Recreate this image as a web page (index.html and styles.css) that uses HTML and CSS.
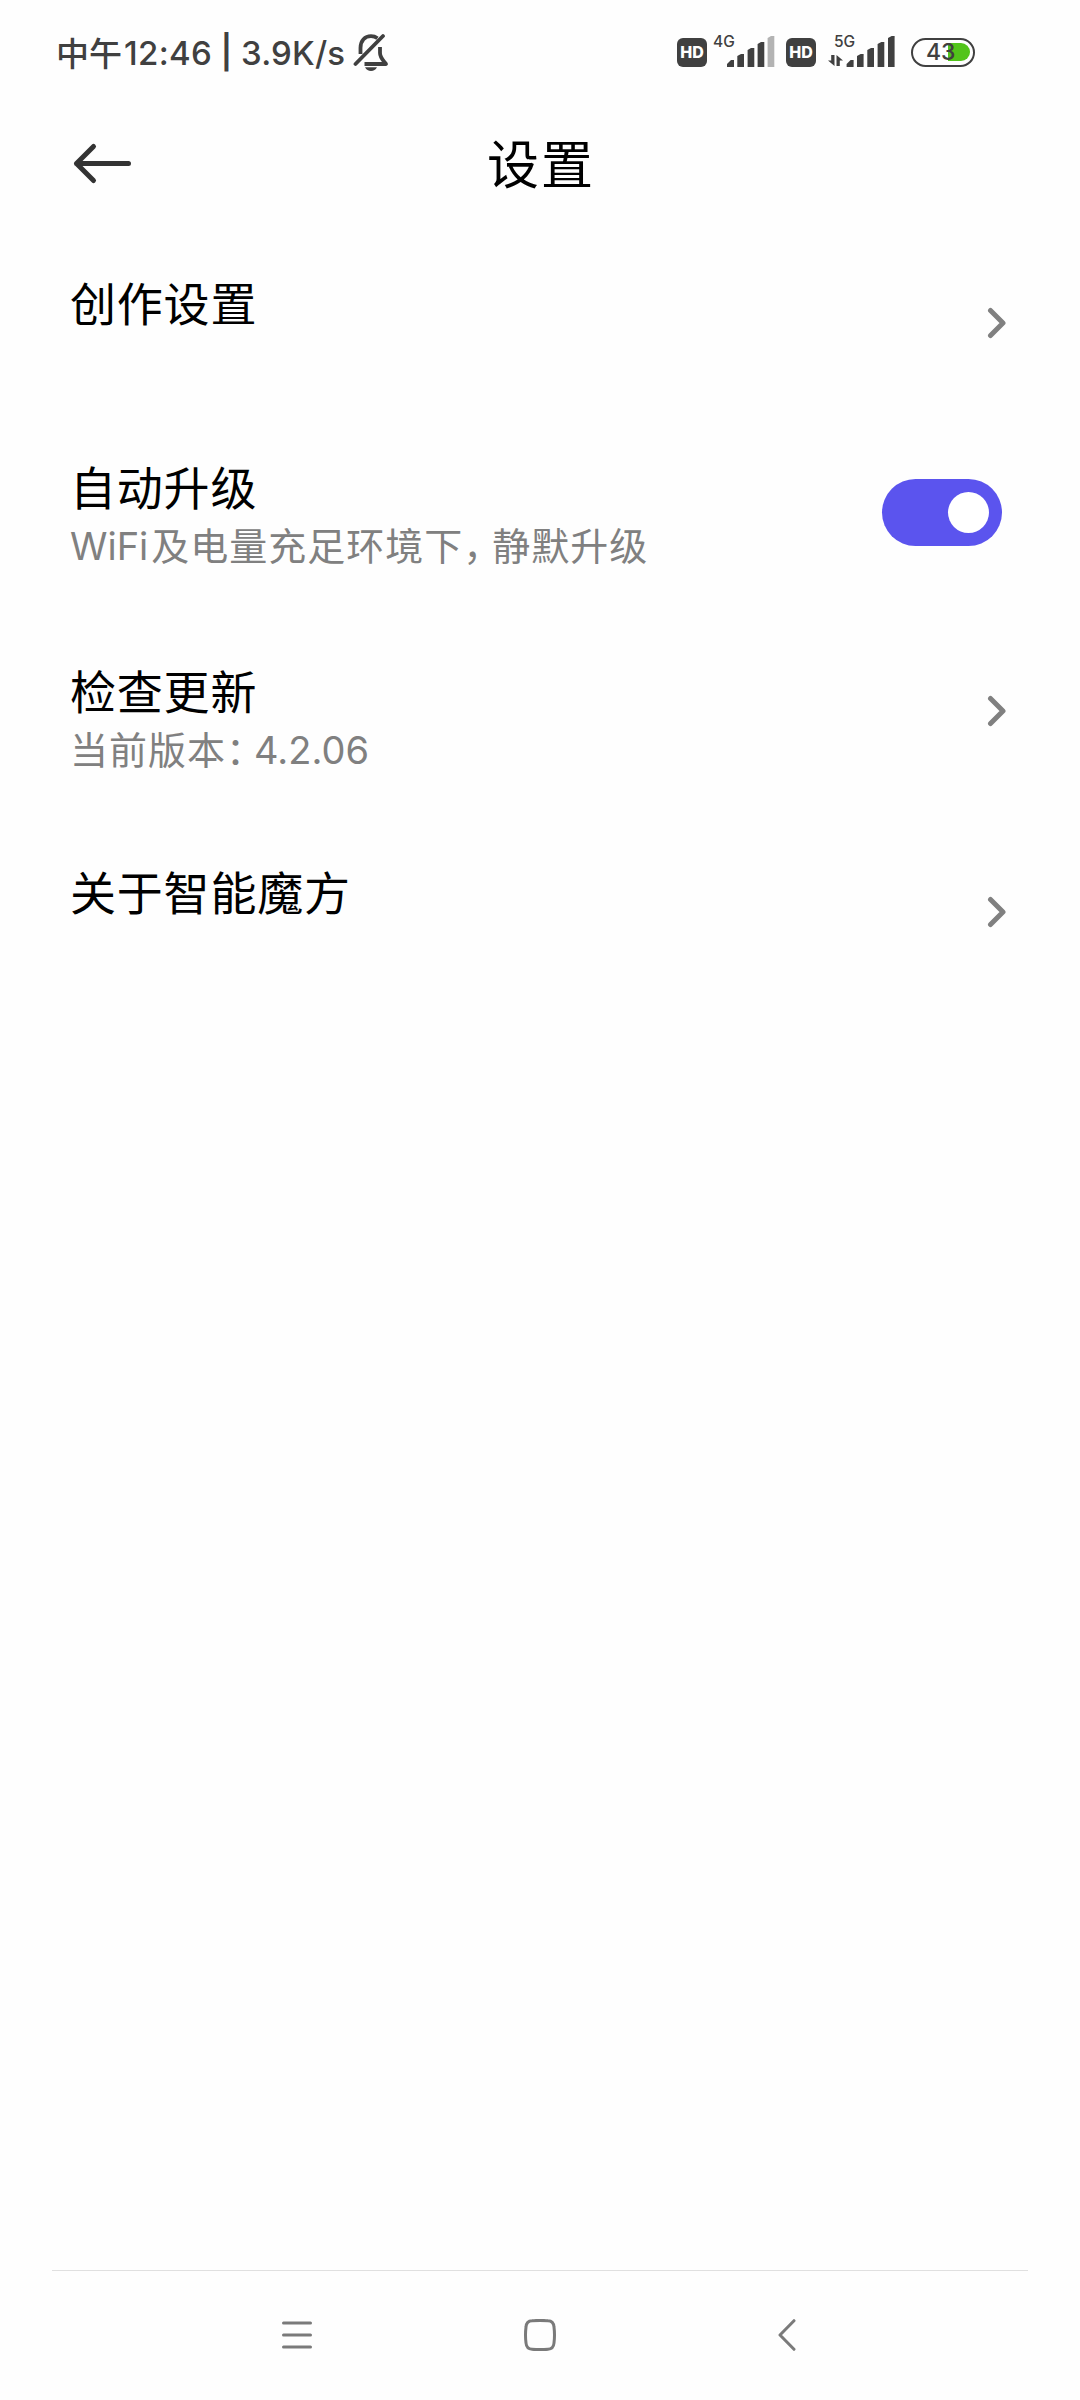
FILE: index.html
```html
<!DOCTYPE html>
<html lang="zh-CN">
<head>
    <meta charset="UTF-8">
    <meta name="viewport" content="width=device-width, initial-scale=1.0">
    <title>设置</title>
    <link rel="stylesheet" href="styles.css">
</head>
<body>
    <div class="statusbar">
        <div class="status-left">
            <span class="status-cn">中午</span><span class="status-time">12:46</span><span class="status-sep">|</span><span class="status-speed">3.9K/s</span>
            <svg class="bell" width="36" height="38" viewBox="0 0 36 38" fill="none" stroke="#404040" stroke-width="3.8">
                <path d="M7.5 21V15C7.5 7.5 12 3.2 18 3.2C20.5 3.2 22.5 3.8 24.5 5.2"/>
                <path d="M27 14V20C27 24.5 29.5 26.5 33 31H11.5" stroke-linejoin="round"/>
                <path d="M2.5 31L30 3" stroke-linecap="round"/>
                <path d="M12 34.2H24Q22 38 18 38T12 34.2Z" fill="#404040" stroke="none"/>
            </svg>
        </div>
        <div class="status-right">
            <span class="hd">HD</span>
            <div class="signal">
                <span class="net">4G</span>
                <svg width="48" height="32" viewBox="0 0 48 32" fill="#404040">
                    <path d="M0 31V28L4 24H7V31Z"/>
                    <path d="M10.3 31V20L14 18H17V31Z"/>
                    <path d="M20.6 31V14L24 12H27.3V31Z"/>
                    <path d="M30.6 31V8L34 6H37.3V31Z"/>
                    <path d="M40.6 31V2L44 0H47.3V31Z" fill="#b3b3b3"/>
                </svg>
            </div>
            <span class="hd">HD</span>
            <div class="signal signal-5g">
                <span class="net">5G</span>
                <svg width="67" height="32" viewBox="0 0 67 32" fill="#404040">
                    <path d="M3.2 19H6.5V30L0 24.5H3.2ZM8.5 19L15 24.5H11.8V30H8.5Z"/>
                    <path d="M18.6 31V28L22.6 24H25.6V31Z"/>
                    <path d="M29 31V20L32.6 18H35.6V31Z"/>
                    <path d="M39.3 31V14L43 12H46V31Z"/>
                    <path d="M49.6 31V8L53.3 6H56.3V31Z"/>
                    <path d="M60 31V2L63.6 0H66.6V31Z"/>
                </svg>
            </div>
            <div class="battery">
                <div class="battery-level"></div>
                <span class="battery-text">43</span>
            </div>
        </div>
    </div>

    <header class="header">
        <svg class="back" width="60" height="44" viewBox="0 0 60 44" fill="none" stroke="#333" stroke-width="5" stroke-linecap="round" stroke-linejoin="round">
            <path d="M21.5 4.5L4.5 21.5L21.5 38.5M4.5 21.5H56.5"/>
        </svg>
        <h1>设置</h1>
    </header>

    <main class="list">
        <div class="item item-create">
            <div class="item-text">
                <div class="title">创作设置</div>
            </div>
            <svg class="chevron" width="20" height="34" viewBox="0 0 20 34"><path d="M3.5 4.5L16 17L3.5 29.5"/></svg>
        </div>
        <div class="item item-upgrade">
            <div class="item-text">
                <div class="title">自动升级</div>
                <div class="desc"><span class="wifi">WiFi</span>及电量充足环境下<span class="comma">，</span>静默升级</div>
            </div>
            <div class="switch"><div class="knob"></div></div>
        </div>
        <div class="item item-check">
            <div class="item-text">
                <div class="title">检查更新</div>
                <div class="desc">当前版本<span class="colon">：</span><span class="version">4.2.06</span></div>
            </div>
            <svg class="chevron" width="20" height="34" viewBox="0 0 20 34"><path d="M3.5 4.5L16 17L3.5 29.5"/></svg>
        </div>
        <div class="item item-about">
            <div class="item-text">
                <div class="title">关于智能魔方</div>
            </div>
            <svg class="chevron" width="20" height="34" viewBox="0 0 20 34"><path d="M3.5 4.5L16 17L3.5 29.5"/></svg>
        </div>
    </main>

    <nav class="navbar">
        <svg width="30" height="32" viewBox="0 0 30 32" fill="none" stroke="#7a7a7a" stroke-width="3" stroke-linecap="round">
            <path d="M1.5 4H28.5M1.5 16H28.5M1.5 28H28.5"/>
        </svg>
        <svg class="home" width="32" height="32" viewBox="0 0 32 32" fill="none" stroke="#7a7a7a" stroke-width="3">
            <path d="M8 1.8Q16 1 24 1.8Q29.5 2 30 8Q31 16 30 24Q29.5 30 24 30.2Q16 31 8 30.2Q2.5 30 2 24Q1 16 2 8Q2.5 2 8 1.8Z"/>
        </svg>
        <svg width="18" height="32" viewBox="0 0 18 32" fill="none" stroke="#7a7a7a" stroke-width="3" stroke-linecap="round" stroke-linejoin="round">
            <path d="M16 1.7L2 16L16 30.3"/>
        </svg>
    </nav>
</body>
</html>
```
FILE: styles.css
```css
* {
    box-sizing: border-box;
}

body {
    font-family: "Noto Sans CJK SC", "Noto Sans", sans-serif;
    background-color: #fefefe;
    margin: 0;
    width: 1080px;
    height: 2400px;
    color: #000;
    display: flex;
    flex-direction: column;
    overflow: hidden;
}

/* barra de estado */
.statusbar {
    height: 104px;
    padding: 0 105px 0 56px;
    display: flex;
    justify-content: space-between;
    align-items: center;
    color: #404040;
}

.status-left {
    display: flex;
    align-items: center;
    height: 104px;
    font-size: 33px;
    font-weight: 500;
    line-height: 104px;
    white-space: nowrap;
}

.status-time,
.status-speed {
    font-family: "Inter", sans-serif;
    padding-top: 2px;
}

.status-time {
    margin-left: 2px;
    letter-spacing: 0.3px;
}

.status-sep {
    width: 29px;
    font-family: "Inter", sans-serif;
    font-weight: 600;
    text-align: center;
}

.status-speed {
    letter-spacing: 0.2px;
}

.bell {
    margin-left: 8px;
}

.status-right {
    display: flex;
    align-items: center;
}

.hd {
    width: 30px;
    height: 29px;
    border-radius: 6px;
    background-color: #404040;
    color: #fff;
    font-family: "Inter", sans-serif;
    font-size: 16px;
    font-weight: 800;
    line-height: 29px;
    text-align: center;
}

.signal {
    position: relative;
    height: 32px;
    margin: 0 11px 0 20px;
}

.signal svg {
    display: block;
}

.signal-5g {
    margin: 0 16px 0 12px;
}

.net {
    position: absolute;
    top: -2px;
    left: -14px;
    font-family: "Inter", sans-serif;
    font-size: 15.5px;
    font-weight: 500;
    line-height: 15px;
}

.signal-5g .net {
    left: 6px;
}

.battery {
    position: relative;
    width: 64px;
    height: 29px;
    border: 2.5px solid #404040;
    border-radius: 15px;
    padding: 3px;
    display: flex;
    justify-content: flex-end;
}

.battery-level {
    width: 22px;
    height: 18px;
    background-color: #52c41a;
    border-radius: 0 9px 9px 0;
}

.battery-text {
    position: absolute;
    left: 13px;
    top: 0;
    font-family: "Inter", sans-serif;
    font-size: 23px;
    font-weight: 500;
    line-height: 25px;
}

/* cabecera */
.header {
    height: 119px;
    padding: 0 70px 0 72px;
    display: grid;
    grid-template-columns: 60px 1fr 60px;
    align-items: center;
}

.header h1 {
    margin: 0 0 4px;
    font-size: 52px;
    font-weight: 400;
    line-height: 76px;
    letter-spacing: 2px;
    text-align: center;
}

.back {
    display: block;
}

/* lista */
.list {
    flex: 1;
    padding: 0 73px 0 70px;
}

.item {
    display: flex;
    justify-content: space-between;
    align-items: center;
}

.item-create {
    height: 199px;
}

.item-create .title,
.item-about .title {
    margin-bottom: 43px;
}

.item-upgrade {
    height: 180px;
}

.item-upgrade .item-text {
    padding-top: 4px;
}

.item-check {
    height: 218px;
}

.item-check .item-text {
    padding-top: 14px;
}

.item-about {
    height: 183px;
}

.title {
    font-size: 46px;
    line-height: 58px;
    letter-spacing: 0.8px;
}

.desc {
    margin-top: 3px;
    font-size: 38px;
    line-height: 54px;
    letter-spacing: 1px;
    color: #808080;
    white-space: nowrap;
}

.wifi,
.version {
    font-family: "Inter", sans-serif;
    letter-spacing: 0;
}

.wifi {
    margin-right: 3px;
}

.comma {
    letter-spacing: -9px;
}

.colon {
    letter-spacing: -10px;
}

.chevron {
    fill: none;
    stroke: #808080;
    stroke-width: 5;
    stroke-linecap: round;
    stroke-linejoin: round;
}

.switch {
    width: 120px;
    height: 67px;
    margin-right: 5px;
    padding: 13px;
    border-radius: 34px;
    background-color: #5b54ee;
    display: flex;
    justify-content: flex-end;
}

.knob {
    width: 41px;
    height: 41px;
    border-radius: 50%;
    background-color: #fff;
}

/* barra de navegación */
.navbar {
    height: 130px;
    margin: 0 52px;
    padding: 0 232px 1px 230px;
    border-top: 1px solid #e0e0e0;
    display: flex;
    justify-content: space-between;
    align-items: center;
}

.home {
    margin-right: 10px;
}
```
